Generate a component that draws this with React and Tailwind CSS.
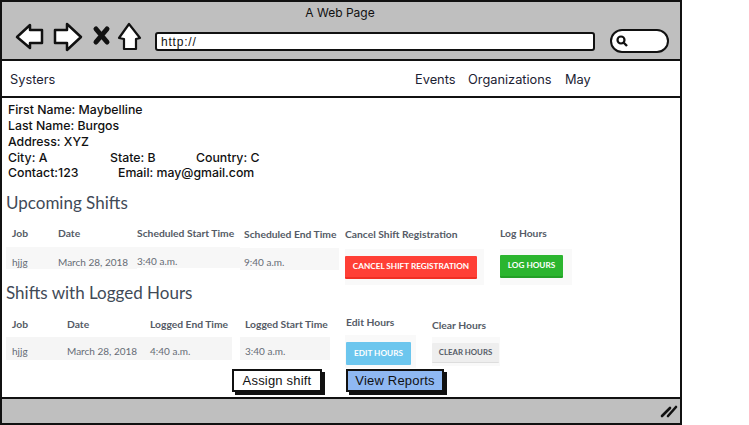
const hand = "font-['Inter',sans-serif]";
const tbl = "font-['Lato',sans-serif]";

function Head({ children, className = "" }) {
  return <div className={`text-[10.3px] font-bold leading-[14px] text-[#555b66] whitespace-nowrap ${className}`}>{children}</div>;
}

function Col({ width, head, headClass = "", cellClass = "", children, className = "" }) {
  return (
    <div className={`flex flex-col shrink-0 ${className}`} style={{ width }}>
      <Head className={headClass}>{head}</Head>
      <div className={`text-[10px] text-[#666c75] whitespace-nowrap ${cellClass}`}>{children}</div>
    </div>
  );
}

function Btn({ className, children }) {
  return (
    <div className={`flex items-center justify-center font-bold uppercase whitespace-nowrap rounded-[1px] ${className}`}>{children}</div>
  );
}

export default function App() {
  return (
    <div className="w-[749px] h-[425px] bg-white overflow-hidden">
      <div className="w-[682px] h-[425px] flex flex-col border-[2px] border-[#111] bg-white">
        {/* browser chrome */}
        <div className="h-[57px] shrink-0 bg-[#bfbfbf] flex flex-col">
          <div className={`h-[22px] pt-[3px] text-center text-[12px] leading-[16px] text-[#111] pr-[2px] ${hand}`}>A Web Page</div>
          <div className="flex items-start h-[30px] pl-[13px]">
            <svg width="130" height="34" viewBox="0 0 130 34" fill="none" className="shrink-0 -mt-[4px]">
              <path d="M2 17 L15 5 L15 10 L27 10 L27 23 L15 23 L15 28 Z" fill="#fff" stroke="#111" strokeWidth="2.5" strokeLinejoin="round" />
              <path d="M40 10 L52 10 L52 4 L66 17 L52 30 L52 23 L40 23 Z" fill="#fff" stroke="#111" strokeWidth="2.5" strokeLinejoin="round" />
              <path d="M81 9 L92 22 M92 9 L81 22" stroke="#111" strokeWidth="5" strokeLinecap="round" />
              <path d="M114 4 L125 18 L121 19 L121 29 L109 29 L109 19 L104 18 Z" fill="#fff" stroke="#111" strokeWidth="2.2" strokeLinejoin="round" />
            </svg>
            <div className="ml-[10px] w-[440px] h-[19px] mt-[8px] bg-white border-[2px] border-[#111] rounded-[3px] flex items-center pl-[4px] text-[12px] font-['Liberation_Sans',sans-serif] tracking-[0.8px] text-[#111]">http://</div>
            <div className="ml-[15px] w-[59px] h-[24px] mt-[5px] bg-white border-[2px] border-[#111] rounded-full flex items-center pl-[3px]">
              <svg width="14" height="14" viewBox="0 0 14 14" fill="none">
                <circle cx="6" cy="6" r="3.5" stroke="#111" strokeWidth="2.2" />
                <path d="M8.5 8.5 L12 12" stroke="#111" strokeWidth="2.4" />
              </svg>
            </div>
          </div>
        </div>

        {/* nav */}
        <div className={`h-[39px] shrink-0 bg-white border-y-[2px] border-[#111] flex items-center pl-[8px] pt-[2px] text-[12.8px] text-[#1b2233] ${hand}`}>
          <span className="w-[405px]">Systers</span>
          <span className="w-[53px]">Events</span>
          <span className="w-[97px]">Organizations</span>
          <span>May</span>
        </div>

        {/* content */}
        <div className="flex-1 min-h-0 flex flex-col pt-[4px]">
          <div className={`pl-[6px] text-[12.3px] font-medium leading-[16px] text-[#111] ${hand}`}>
            <div>First Name: Maybelline</div>
            <div>Last Name: Burgos</div>
            <div>Address: XYZ</div>
            <div className="flex leading-[15px]">
              <span className="w-[102px]">City: A</span>
              <span className="w-[86px]">State: B</span>
              <span>Country: C</span>
            </div>
            <div className="flex">
              <span className="w-[110px]">Contact:123</span>
              <span>Email: may@gmail.com</span>
            </div>
          </div>

          <div className={`${tbl} flex flex-col`}>
            <div className="mt-[10px] pl-[4px] text-[17px] leading-[24px] text-[#414a57]">Upcoming Shifts</div>
            <div className="flex items-start pl-[4px] mt-[11px]">
              <Col width={52} head="Job" headClass="pl-[6px]" cellClass="mt-[7px] h-[22px] bg-[#f7f7f7] pl-[6px] leading-[30px]">hjjg</Col>
              <Col width={79} head="Date" cellClass="mt-[7px] h-[22px] bg-[#f7f7f7] leading-[30px]">March 28, 2018</Col>
              <Col width={103} head="Scheduled Start Time" cellClass="mt-[7px] h-[21px] bg-[#f7f7f7] leading-[28px]">3:40 a.m.</Col>
              <Col width={99} head="Scheduled End Time" headClass="pt-[1px] pl-[4px]" cellClass="mt-[7px] h-[22px] bg-[#f7f7f7] pl-[4px] leading-[28px]">9:40 a.m.</Col>
              <Col width={139} head="Cancel Shift Registration" headClass="pt-[1px]" cellClass="mt-[8px] h-[36px] bg-[#f9f9f9] pt-[7px]" className="ml-[6px]">
                <Btn className="w-[132px] h-[23px] bg-[#ff3f36] border-b-[2px] border-[#f02f24] text-white text-[8.2px]">Cancel Shift Registration</Btn>
              </Col>
              <Col width={72} head="Log Hours" cellClass="mt-[9px] h-[36px] bg-[#f9f9f9] pt-[6px]" className="ml-[16px]">
                <Btn className="w-[63px] h-[23px] bg-[#2bb52f] border-b-[2px] border-[#23a027] text-white text-[8.2px]">Log Hours</Btn>
              </Col>
            </div>

            <div className="-mt-[4px] pl-[4px] text-[17px] leading-[24px] text-[#414a57]">Shifts with Logged Hours</div>
            <div className="flex items-start pl-[4px] mt-[12px]">
              <Col width={61} head="Job" headClass="pl-[6px]" cellClass="mt-[6px] h-[23px] bg-[#f5f5f5] pl-[6px] leading-[28px]">hjjg</Col>
              <Col width={83} head="Date" cellClass="mt-[6px] h-[23px] bg-[#f5f5f5] leading-[28px]">March 28, 2018</Col>
              <Col width={82} head="Logged End Time" cellClass="mt-[6px] h-[23px] bg-[#f5f5f5] leading-[28px]">4:40 a.m.</Col>
              <Col width={90} head="Logged Start Time" headClass="pl-[5px]" cellClass="mt-[6px] h-[23px] bg-[#f5f5f5] pl-[5px] leading-[28px]" className="ml-[8px]">3:40 a.m.</Col>
              <Col width={71} head="Edit Hours" headClass="pl-[1px] -mt-[2px]" cellClass="mt-[6px] h-[33px] bg-[#f9f9f9] pt-[7px] pl-[1px]" className="ml-[15px]">
                <Btn className="w-[65px] h-[23px] bg-[#6cc6ee] text-white text-[8.2px]">Edit Hours</Btn>
              </Col>
              <Col width={68} head="Clear Hours" headClass="pt-[1px]" cellClass="mt-[5px] h-[29px] bg-[#f9f9f9] pt-[6px]" className="ml-[16px]">
                <Btn className="w-[67px] h-[20px] bg-[#eeeeee] border-b-[1px] border-[#dddddd] text-[#555b66] text-[7.8px]">Clear Hours</Btn>
              </Col>
            </div>
          </div>

          <div className="flex pl-[230px] mt-[1px] font-['Liberation_Sans',sans-serif] text-[13px] tracking-[0.2px] text-[#111] relative">
            <div className="w-[90px] h-[23px] bg-white border-[2px] border-[#111] shadow-[3px_3px_0_#111] flex items-center justify-center">Assign shift</div>
            <div className="ml-[24px] w-[98px] h-[23px] bg-[#8fb8f2] border-[2px] border-[#111] shadow-[3px_3px_0_#111] flex items-center justify-center">View Reports</div>
          </div>
        </div>

        {/* status bar */}
        <div className="h-[26px] shrink-0 bg-[#bfbfbf] border-t-[2px] border-[#111] flex items-center justify-end pr-[2px]">
          <svg width="18" height="14" viewBox="0 0 18 14" fill="none">
            <path d="M2 12 L10 4 M8 12 L16 3" stroke="#111" strokeWidth="2.6" strokeLinecap="round" />
          </svg>
        </div>
      </div>
    </div>
  );
}
